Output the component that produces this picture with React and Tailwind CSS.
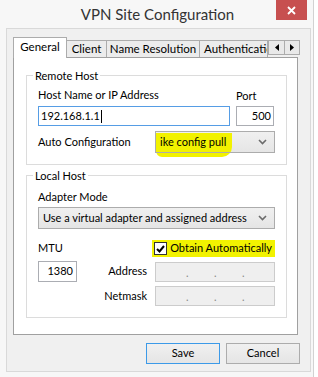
import React from "react";

const font = { fontFamily: "Lato, 'Liberation Sans', sans-serif" };

const Chevron = () => (
  <svg width="9" height="6" viewBox="0 0 9 6" className="shrink-0">
    <polyline points="1,1 4.5,4.5 8,1" fill="none" stroke="#6b6b6b" strokeWidth="1.6" />
  </svg>
);

const Select = ({ children, className = "" }) => (
  <div
    className={`relative h-[22px] border border-[#acacac] flex items-center pl-[4px] pr-[7px] ${className}`}
  >
    <div className="flex-1 truncate">{children}</div>
    <Chevron />
  </div>
);

const Group = ({ title, children, className = "" }) => (
  <div className={`relative border border-[#dcdcdc] px-[11px] ${className}`}>
    <span className="absolute -top-[8px] left-[6px] bg-white px-[2px] leading-[15px]">{title}</span>
    {children}
  </div>
);

const DisabledIp = () => (
  <div className="w-[120px] h-[20px] border border-[#cccccc] bg-[#efefef] relative">
    <span className="absolute left-[30px] top-[4px] text-[#888] leading-[12px]">.</span>
    <span className="absolute left-[58px] top-[4px] text-[#888] leading-[12px]">.</span>
    <span className="absolute left-[86px] top-[4px] text-[#888] leading-[12px]">.</span>
  </div>
);

export default function App() {
  return (
    <div className="w-[318px] h-[377px] bg-white overflow-hidden text-[11px] text-black whitespace-nowrap" style={font}>
      <div className="relative w-[314px] h-full bg-[#f7f7f7] border-r border-[#d2d2d2] flex flex-col">
        {/* title bar */}
        <div className="h-[28px] flex items-center justify-center text-[15px] text-[#333] pl-[2px]">
          VPN Site Configuration
        </div>
        <div className="absolute top-0 right-[6px] w-[31px] h-[20px] bg-[#c75050] flex items-center justify-center">
          <svg width="9" height="9" viewBox="0 0 9 9">
            <path d="M1 1 L8 8 M8 1 L1 8" stroke="#fff" strokeWidth="1.8" />
          </svg>
        </div>

        {/* content panel */}
        <div className="ml-[6px] w-[305px] h-[344px] border border-[#d9d9d9] bg-[#f0f0f0] pt-[8px] pl-[6px] flex flex-col">
          {/* tabs */}
          <div className="flex items-end h-[20px] text-[11.5px]">
            <div className="relative z-10 w-[54px] h-[21px] -mb-px border border-b-0 border-[#acacac] bg-white flex items-center justify-center pb-[3px]">
              General
            </div>
            <div className="-ml-px w-[41px] h-[17px] border border-b-0 border-[#acacac] bg-[#ececec] flex items-center justify-center">
              Client
            </div>
            <div className="-ml-px w-[94px] h-[17px] border border-b-0 border-[#acacac] bg-[#ececec] flex items-center justify-center">
              Name Resolution
            </div>
            <div className="-ml-px w-[69px] h-[17px] border border-b-0 border-[#acacac] bg-[#ececec] overflow-hidden pl-[4px] flex items-center">
              Authentication
            </div>
            <div className="flex mb-[2px]">
              <div className="w-[17px] h-[15px] border border-[#acacac] bg-[#e9e9e9] flex items-center justify-center">
                <svg width="4" height="7" viewBox="0 0 4 7"><polygon points="4,0 0,3.5 4,7" fill="#000" /></svg>
              </div>
              <div className="-ml-px w-[16px] h-[15px] border border-[#acacac] bg-[#e9e9e9] flex items-center justify-center">
                <svg width="4" height="7" viewBox="0 0 4 7"><polygon points="0,0 4,3.5 0,7" fill="#000" /></svg>
              </div>
            </div>
          </div>

          {/* tab page */}
          <div className="w-[285px] h-[278px] border border-[#a0a0a0] bg-white pt-[17px] pl-[12px]">
            <Group title="Remote Host" className="w-[261px] h-[90px]">
              <div className="flex mt-[11px] leading-[15px]">
                <div className="w-[198px]">Host Name or IP Address</div>
                <div className="pt-[1px]">Port</div>
              </div>
              <div className="flex gap-[6px] mt-[3px]">
                <div className="w-[192px] h-[20px] border border-[#569de5] flex items-center pl-[2px]">
                  192.168.1.1<span className="inline-block w-px h-[13px] bg-black ml-[1px]" />
                </div>
                <div className="w-[38px] h-[20px] border border-[#abadb3] flex items-center justify-end pr-[2px]">500</div>
              </div>
              <div className="flex items-center mt-[5px]">
                <div className="w-[117px]">Auto Configuration</div>
                <div className="relative w-[120px]">
                  <div className="absolute inset-0 bg-gradient-to-b from-[#f0f0f0] to-[#e5e5e5]" />
                  <div className="absolute left-[1px] top-[2px] w-[76px] h-[24px] bg-[#f2f200] rounded-bl-[6px] rounded-br-[10px]" />
                  <Select>
                    <span className="relative">ike config pull</span>
                  </Select>
                </div>
              </div>
            </Group>

            <Group title="Local Host" className="w-[261px] h-[143px] mt-[10px]">
              <div className="mt-[13px] leading-[15px]">Adapter Mode</div>
              <Select className="mt-[3px] w-[237px] bg-gradient-to-b from-[#f0f0f0] to-[#e5e5e5]">
                Use a virtual adapter and assigned address
              </Select>
              <div className="flex items-center h-[17px] mt-[11px]">
                <div className="w-[115px]">MTU</div>
                <div className="h-[17px] bg-[#f2f200] flex items-center pl-[2px] pr-[3px]">
                  <div className="w-[13px] h-[13px] border border-[#333] bg-white flex items-center justify-center">
                    <svg width="9" height="8" viewBox="0 0 9 8">
                      <path d="M1 4 L3.5 6.5 L8 1" fill="none" stroke="#000" strokeWidth="2" />
                    </svg>
                  </div>
                  <span className="ml-[3px]">Obtain Automatically</span>
                </div>
              </div>
              <div className="flex items-center mt-[4px]">
                <div className="w-[39px] h-[21px] border border-[#abadb3] flex items-center justify-end pr-[3px]">1380</div>
                <div className="flex-1 text-right pr-[8px]">Address</div>
                <DisabledIp />
              </div>
              <div className="flex items-center mt-[4px]">
                <div className="flex-1 text-right pr-[8px]">Netmask</div>
                <DisabledIp />
              </div>
            </Group>
          </div>

          {/* buttons */}
          <div className="flex justify-end gap-[6px] mt-[8px] pr-[10px]">
            <button className="w-[74px] h-[21px] border border-[#3c9ae8] bg-gradient-to-b from-[#f0f0f0] to-[#e5e5e5] flex items-center justify-center">
              Save
            </button>
            <button className="w-[74px] h-[21px] border border-[#acacac] bg-gradient-to-b from-[#f0f0f0] to-[#e5e5e5] flex items-center justify-center">
              Cancel
            </button>
          </div>
        </div>
      </div>
    </div>
  );
}
